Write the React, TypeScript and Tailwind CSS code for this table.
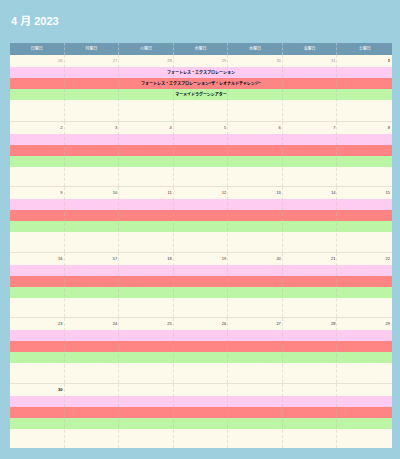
import React from "react";

const days = ["日曜日", "月曜日", "火曜日", "水曜日", "木曜日", "金曜日", "土曜日"];

type Day = { n?: number; other?: boolean; bold?: boolean };

const weeks: Day[][] = [
  [
    { n: 26, other: true },
    { n: 27, other: true },
    { n: 28, other: true },
    { n: 29, other: true },
    { n: 30, other: true },
    { n: 31, other: true },
    { n: 1, bold: true },
  ],
  [2, 3, 4, 5, 6, 7, 8].map((n) => ({ n })),
  [9, 10, 11, 12, 13, 14, 15].map((n) => ({ n })),
  [16, 17, 18, 19, 20, 21, 22].map((n) => ({ n })),
  [23, 24, 25, 26, 27, 28, 29].map((n) => ({ n })),
  [{ n: 30, bold: true }, {}, {}, {}, {}, {}, {}],
];

function Band({ color, label }: { color: string; label?: string }) {
  return (
    <div className={`h-[11px] w-full flex items-center justify-center ${color}`}>
      {label ? (
        <span className="text-[4px] leading-none font-bold text-black whitespace-nowrap">{label}</span>
      ) : null}
    </div>
  );
}

function Week({ days, first }: { days: Day[]; first: boolean }) {
  return (
    <div className={`relative flex flex-col ${first ? "" : "border-t border-[#e6e2d5]"}`}>
      <div className="grid grid-cols-7 h-[12px]">
        {days.map((d, i) => (
          <div key={i} className="flex items-center justify-end pr-[2px]">
            {d.n !== undefined ? (
              <span
                className={`text-[4px] leading-none ${
                  d.other ? "text-[#9a9a9a]" : d.bold ? "text-[#111] font-bold" : "text-[#333]"
                }`}
              >
                {d.n}
              </span>
            ) : null}
          </div>
        ))}
      </div>
      <Band color="bg-[#ffccf1]" label={first ? "フォートレス・エクスプロレーション" : undefined} />
      <Band
        color="bg-[#ff8585]"
        label={first ? "フォートレス・エクスプロレーション“ザ・レオナルドチャレンジ”" : undefined}
      />
      <Band color="bg-[#bbf5a5]" label={first ? "マーメイドラグーンシアター" : undefined} />
      <div className="flex-1" />
      <div className="absolute inset-0 grid grid-cols-7 pointer-events-none">
        {[0, 1, 2, 3, 4, 5, 6].map((i) => (
          <div
            key={i}
            className={i < 6 ? "border-r border-dashed border-[rgba(190,185,170,0.35)]" : ""}
          />
        ))}
      </div>
    </div>
  );
}

export default function App() {
  return (
    <div
      className="w-[400px] h-[459px] bg-[#9dcfde] pl-[10px] pr-[8px]"
      style={{ fontFamily: '"Liberation Sans", "Noto Sans CJK JP", sans-serif' }}
    >
      <div className="h-[43px] flex items-center pl-[1px]">
        <h1 className="text-[11px] font-bold text-white leading-none">4 月 2023</h1>
      </div>
      <div className="grid grid-cols-7 h-[12px] bg-[#6f9ab2]">
        {days.map((d, i) => (
          <div
            key={d}
            className={`flex items-center justify-center text-[4px] leading-none text-white ${
              i < 6 ? "border-r border-dashed border-white/30" : ""
            }`}
          >
            {d}
          </div>
        ))}
      </div>
      <div className="grid grid-rows-6 h-[393px] bg-[#fdf9eb]">
        {weeks.map((w, i) => (
          <Week key={i} days={w} first={i === 0} />
        ))}
      </div>
    </div>
  );
}
